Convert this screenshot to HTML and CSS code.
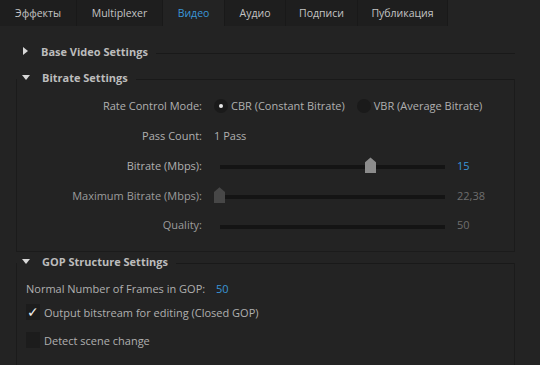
FILE: index.html
```html
<!DOCTYPE html>
<html lang="ru">
<head>
<meta charset="UTF-8" />
<title>Видео</title>
<link rel="stylesheet" href="styles.css">
</head>
<body>

<div class="tabs">
  <div class="tab t-fx">Эффекты</div>
  <div class="tab t-mux">Multiplexer</div>
  <div class="tab t-video active">Видео</div>
  <div class="tab t-audio">Аудио</div>
  <div class="tab t-subs">Подписи</div>
  <div class="tab t-pub">Публикация</div>
</div>

<div class="panel">
  <div class="section collapsed">
    <div class="head">
      <span class="arrow right"></span>
      <span class="title">Base Video Settings</span>
      <span class="line"></span>
    </div>
  </div>

  <div class="section open bitrate">
    <div class="head">
      <span class="arrow down"></span>
      <span class="title">Bitrate Settings</span>
      <span class="line"></span>
    </div>
    <div class="rows">
      <div class="row">
        <div class="label">Rate Control Mode:</div>
        <div class="ctrl">
          <span class="radio checked"></span><span class="opt">CBR (Constant Bitrate)</span>
          <span class="radio"></span><span class="opt">VBR (Average Bitrate)</span>
        </div>
      </div>
      <div class="row">
        <div class="label">Pass Count:</div>
        <div class="ctrl">1 Pass</div>
      </div>
      <div class="row">
        <div class="label">Bitrate (Mbps):</div>
        <div class="ctrl">
          <div class="slider"><div class="track"></div><div class="thumb" style="left: 151px"></div></div>
          <span class="value blue">15</span>
        </div>
      </div>
      <div class="row dim">
        <div class="label">Maximum Bitrate (Mbps):</div>
        <div class="ctrl">
          <div class="slider"><div class="track"></div><div class="thumb off" style="left: 0px"></div></div>
          <span class="value">22,38</span>
        </div>
      </div>
      <div class="row dim">
        <div class="label">Quality:</div>
        <div class="ctrl">
          <div class="slider"><div class="track"></div></div>
          <span class="value">50</span>
        </div>
      </div>
    </div>
  </div>

  <div class="section open gop">
    <div class="head">
      <span class="arrow down"></span>
      <span class="title">GOP Structure Settings</span>
      <span class="line"></span>
    </div>
    <div class="gop-body">
      <div class="frames">Normal Number of Frames in GOP: <span class="blue">50</span></div>
      <div class="check"><span class="box">&#10003;</span>Output bitstream for editing (Closed GOP)</div>
      <div class="check"><span class="box"></span>Detect scene change</div>
    </div>
  </div>
</div>

</body>
</html>
```

FILE: styles.css
```css
* {
  box-sizing: border-box;
}
body {
  margin: 0;
  background: #232323;
  color: #b0b0b0;
  font-family: "Open Sans", "Noto Sans", sans-serif;
  font-size: 11px;
  height: 365px;
  overflow: hidden;
}
.blue {
  color: #3a96d8;
}

.tabs {
  display: flex;
  height: 26px;
}
.tab {
  background: #1e1e1e;
  border-right: 1px solid #191919;
  line-height: 26px;
  font-size: 10.5px;
  color: #c4c4c4;
  text-align: center;
}
.t-fx { width: 77px; }
.t-mux { width: 86px; }
.t-video { width: 62px; }
.t-audio { width: 61px; }
.t-subs { width: 72px; }
.t-pub { width: 90px; }
.tab.active {
  background: #232323;
  color: #3a96d8;
}

.panel {
  padding: 16px 25px 0 16px;
}
.head {
  display: flex;
  align-items: center;
  height: 18px;
  padding-left: 6px;
}
.arrow {
  width: 0;
  height: 0;
  margin-right: 12px;
}
.arrow.right {
  border-top: 4px solid transparent;
  border-bottom: 4px solid transparent;
  border-left: 5px solid #d8d8d8;
  margin-left: 1px;
  margin-right: 13px;
}
.arrow.down {
  border-left: 4px solid transparent;
  border-right: 4px solid transparent;
  border-top: 5px solid #d8d8d8;
}
.title {
  font-weight: 700;
  color: #bcbcbc;
  margin-right: 8px;
}
.line {
  flex: 1;
  height: 1px;
  background: #191919;
  margin-top: 4px;
}

.section.collapsed {
  margin-bottom: 9px;
}
.section.open {
  display: flow-root;
  border: 1px solid #1b1b1b;
  border-top: none;
}
.section.open > .head {
  margin: -11px 0 0 -1px;
}
.section.bitrate {
  margin-top: 19px;
  height: 173px;
}
.section.gop {
  margin-top: 11px;
  height: 120px;
}

.rows {
  padding-top: 5px;
}
.row {
  display: flex;
  align-items: center;
  height: 29.75px;
}
.label {
  width: 197px;
  text-align: right;
  padding-right: 12px;
  flex: none;
}
.ctrl {
  display: flex;
  align-items: center;
}
.radio {
  width: 14px;
  height: 14px;
  border-radius: 50%;
  background: #1a1a1a;
  margin-right: 3px;
  display: flex;
  align-items: center;
  justify-content: center;
}
.radio.checked::after {
  content: "";
  width: 4px;
  height: 4px;
  border-radius: 50%;
  background: #e8e8e8;
}
.opt {
  margin-right: 12px;
}

.slider {
  position: relative;
  width: 231px;
  height: 16px;
}
.track {
  margin: 8px 0 0 6px;
  height: 4px;
  background: #141414;
}
.thumb {
  position: absolute;
  top: 0;
  width: 11px;
  height: 16px;
  background: #8c8c8c;
  clip-path: polygon(50% 0, 100% 30%, 100% 100%, 0 100%, 0 30%);
}
.thumb.off {
  background: #474747;
}
.value {
  margin-left: 12px;
  color: #6e6e6e;
}
.value.blue {
  color: #3a96d8;
}
.dim .label {
  color: #9c9c9c;
}

.gop-body {
  padding: 11px 0 0 9px;
}
.frames {
  height: 17px;
}
.frames .blue {
  margin-left: 8px;
}
.check {
  display: flex;
  align-items: center;
  height: 28px;
}
.box {
  width: 14px;
  height: 16px;
  background: #1c1c1c;
  margin-right: 4px;
  color: #f0f0f0;
  font-size: 14px;
  line-height: 16px;
  text-align: center;
}
```
